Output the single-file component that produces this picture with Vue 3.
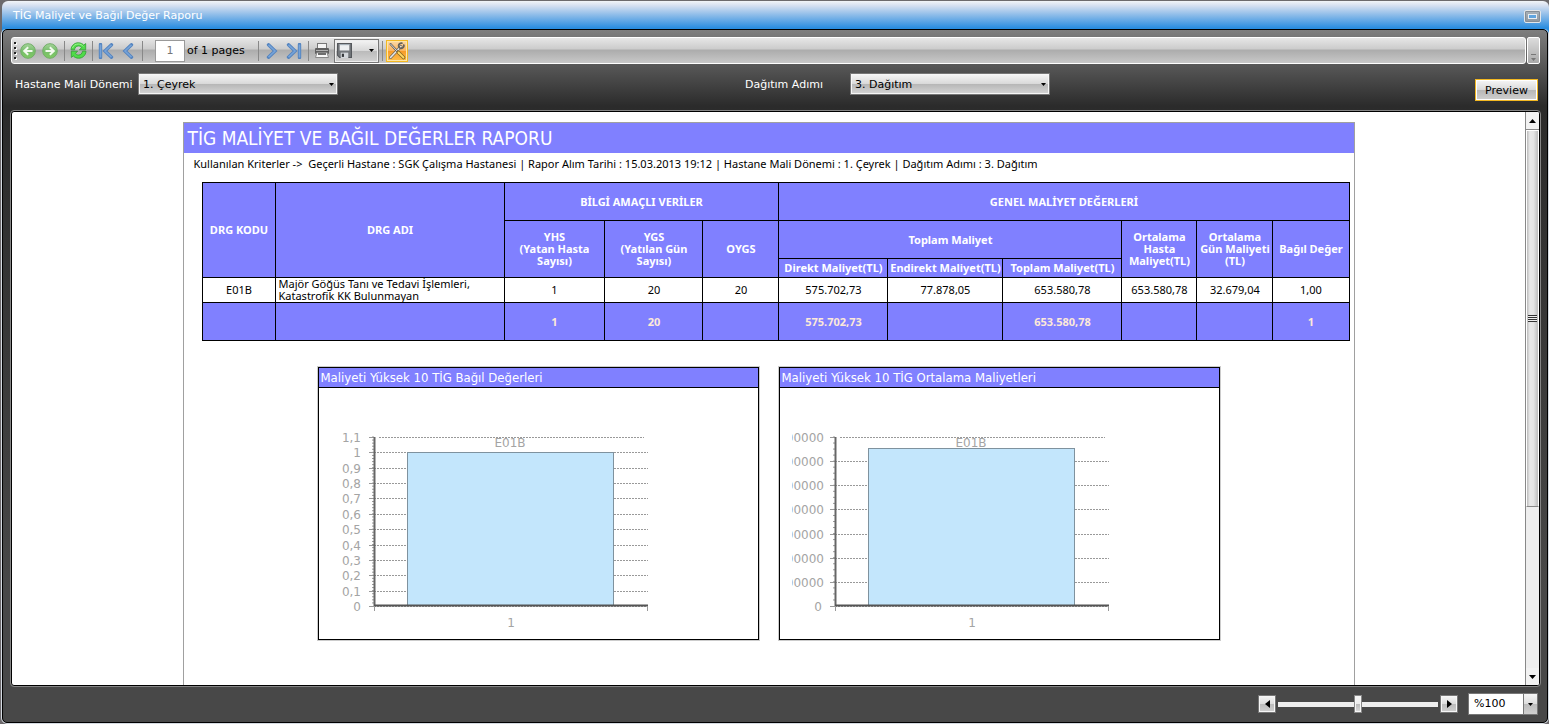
<script setup>
import { ref } from 'vue'

const period = ref('1. Çeyrek')
const step = ref('3. Dağıtım')
const pageNo = ref('1')
const zoom = ref(50)
const zoomText = ref('%100')

const columns = [74, 228, 101, 98, 76, 109, 115, 119, 75, 76, 76]
const columnTotal = columns.reduce((a, b) => a + b, 0)

const row = ['1', '20', '20', '575.702,73', '77.878,05', '653.580,78', '653.580,78', '32.679,04', '1,00']
const totals = ['', '', '1', '20', '', '575.702,73', '', '653.580,78', '', '', '1']

const plotTop = 49
const plotBottom = 218
function ticks(labels) {
  const gap = (plotBottom - plotTop) / (labels.length - 1)
  return labels.map((label, i) => ({ label, y: Math.round(plotTop + gap * i) + 0.5 }))
}

const charts = [
  {
    title: 'Maliyeti Yüksek 10 TİG Bağıl Değerleri',
    ticks: ticks(['1,1', '1', '0,9', '0,8', '0,7', '0,6', '0,5', '0,4', '0,3', '0,2', '0,1', '0']),
    minor: 55,
    barTop: 64,
    labelEnd: 42
  },
  {
    title: 'Maliyeti Yüksek 10 TİG Ortalama Maliyetleri',
    ticks: ticks(['700000', '600000', '500000', '400000', '300000', '200000', '100000', '0']),
    minor: 28,
    barTop: 60,
    labelEnd: 44
  }
]
function minorTicks(count) {
  return Array.from({ length: count }, (_, i) => plotTop + ((plotBottom - plotTop) / count) * i)
}
</script>

<template>
  <main class="window">
    <header class="titlebar">
      <h1>TİG Maliyet ve Bağıl Değer Raporu</h1>
      <button class="restore" aria-label="Simge durumu"><span></span></button>
    </header>

    <section class="panel">
      <div class="toolbar-row">
        <div class="toolbar" role="toolbar">
          <svg class="grip" width="3" height="18" viewBox="0 0 3 18">
            <g fill="#fff"><rect x="1" y="1" width="2" height="2" /><rect x="1" y="6" width="2" height="2" /><rect x="1" y="11" width="2" height="2" /><rect x="1" y="16" width="2" height="2" /></g>
            <g fill="#222"><rect width="2" height="2" /><rect y="5" width="2" height="2" /><rect y="10" width="2" height="2" /><rect y="15" width="2" height="2" /></g>
          </svg>
          <button class="tool" aria-label="Geri">
            <svg width="16" height="16" viewBox="0 0 16 16">
              <defs>
                <linearGradient id="green" x1="0" y1="0" x2="0" y2="1"><stop offset="0" stop-color="#a5d59a" /><stop offset=".5" stop-color="#77bd6b" /><stop offset="1" stop-color="#7fca62" /></linearGradient>
              </defs>
              <circle cx="8" cy="8" r="7.3" fill="url(#green)" stroke="#72ad68" />
              <path d="M12.5 8H4.5M8.2 4.2L4.2 8l4 3.8" fill="none" stroke="#f3faef" stroke-width="2" />
            </svg>
          </button>
          <button class="tool" aria-label="İleri">
            <svg width="16" height="16" viewBox="0 0 16 16">
              <circle cx="8" cy="8" r="7.3" fill="url(#green)" stroke="#72ad68" />
              <path d="M3.5 8h8M7.8 4.2l4 3.8-4 3.8" fill="none" stroke="#f3faef" stroke-width="2" />
            </svg>
          </button>
          <span class="sep"></span>
          <button class="tool" aria-label="Yenile">
            <svg width="17" height="17" viewBox="0 0 17 17">
              <g fill="#4fdc48" stroke="#329d35" stroke-width=".8" stroke-linejoin="round">
                <path d="M1 7.800C1.200 3.500 4.500 .8 8.300 .8c2.400 0 4.200 .9 5.400 2.300L15.700 1.600v6.200H9.400l2.100-2.200C10.700 4.500 9.700 4 8.400 4 6.300 4 4.900 5.400 4.500 7.800z" />
                <path d="M16 9.200c-.2 4.300-3.500 7-7.300 7-2.400 0-4.200-.9-5.400-2.300L1.300 15.400V9.200h6.300l-2.100 2.200c.8 1.100 1.800 1.600 3.100 1.600 2.100 0 3.500-1.400 3.900-3.800z" />
              </g>
              <path d="M2.500 6C3.500 3.300 5.600 2 8.300 2c2 0 3.700.8 5 2.400" fill="none" stroke="#a1f391" />
            </svg>
          </button>
          <span class="sep"></span>
          <button class="tool" aria-label="İlk sayfa">
            <svg width="16" height="16" viewBox="0 0 16 16" fill="none"><path d="M2.500 1.500v13M13.500 1.800L7 8l6.500 6.200" stroke="#5383bf" stroke-width="3.400" stroke-linecap="round" /><path d="M2.500 1.500v13M13.500 1.800L7 8l6.500 6.200" stroke="#76a3d8" stroke-width="1.600" /></svg>
          </button>
          <button class="tool" aria-label="Önceki sayfa">
            <svg width="16" height="16" viewBox="0 0 16 16" fill="none"><path d="M11.500 1.800L5 8l6.500 6.200" stroke="#5383bf" stroke-width="3.400" stroke-linecap="round" /><path d="M11.500 1.800L5 8l6.500 6.200" stroke="#76a3d8" stroke-width="1.600" /></svg>
          </button>
          <span class="sep"></span>
          <input id="page-no" v-model="pageNo" class="page-no" type="text" />
          <label class="page-of" for="page-no">of 1 pages</label>
          <span class="sep"></span>
          <button class="tool" aria-label="Sonraki sayfa">
            <svg width="16" height="16" viewBox="0 0 16 16" fill="none"><path d="M4.500 1.800L11 8l-6.500 6.200" stroke="#5383bf" stroke-width="3.400" stroke-linecap="round" /><path d="M4.500 1.800L11 8l-6.500 6.200" stroke="#76a3d8" stroke-width="1.600" /></svg>
          </button>
          <button class="tool" aria-label="Son sayfa">
            <svg width="16" height="16" viewBox="0 0 16 16" fill="none"><path d="M13.500 1.500v13M2.500 1.800L9 8l-6.500 6.200" stroke="#5383bf" stroke-width="3.400" stroke-linecap="round" /><path d="M13.500 1.500v13M2.500 1.800L9 8l-6.500 6.200" stroke="#76a3d8" stroke-width="1.600" /></svg>
          </button>
          <span class="sep"></span>
          <button class="tool" aria-label="Yazdır">
            <svg width="16" height="16" viewBox="0 0 16 16">
              <rect x="3.500" y=".5" width="9" height="5" fill="#f4f4f4" stroke="#777" />
              <rect x="1" y="5" width="14" height="6" rx="1" fill="#606060" />
              <path d="M2 7.500h12" stroke="#b0b0b0" />
              <path d="M3 9.500h10l1.500 5h-13z" fill="#f8f8f8" stroke="#888" />
              <path d="M4 11h8" stroke="#333" stroke-width="1.400" />
            </svg>
          </button>
          <button class="save" aria-label="Kaydet">
            <svg width="15" height="15" viewBox="0 0 14 14">
              <path d="M.5.5h13v13h-11l-2-2z" fill="#73777b" stroke="#55585c" />
              <rect x="2.500" y="1" width="9" height="6" fill="#edf0f2" />
              <path d="M2.500 1.500h9" stroke="#9faab4" />
              <rect x="3.500" y="9" width="7" height="5" fill="#d3d7db" />
              <rect x="4.500" y="10" width="2" height="3" fill="#35383b" />
            </svg>
            <svg width="5" height="3" viewBox="0 0 5 3"><path d="M0 0h5L2.500 3z" /></svg>
          </button>
          <span class="sep"></span>
          <button class="params" aria-label="Parametreler">
            <svg width="18" height="18" viewBox="0 0 18 18" fill="none" stroke-linecap="round">
              <path d="M2.500 15.500L13 4.500" stroke="#6b665c" stroke-width="3" />
              <path d="M2.500 15.500L13 4.500" stroke="#e8e8e6" stroke-width="1.600" />
              <path d="M15.800 3.200a2.600 2.600 0 1 1-2-2" stroke="#66625a" stroke-width="1.800" />
              <path d="M2.500 2L9 9" stroke="#5c5a56" stroke-width="2" />
              <path d="M2.500 2L9 9" stroke="#ddd" />
              <path d="M10.500 10.500l5 5" stroke="#8a6a23" stroke-width="3.600" />
              <path d="M10.500 10.500l5 5" stroke="#ffd964" stroke-width="1.800" />
            </svg>
          </button>
        </div>
        <button class="overflow" aria-label="Diğer">
          <svg width="5" height="7" viewBox="0 0 5 7"><path d="M0 0h5v1H0zM0 4h5L2.500 7z" fill="#777" /></svg>
        </button>
      </div>

      <form class="criteria" @submit.prevent>
        <div class="field">
          <label for="period">Hastane Mali Dönemi</label>
          <span class="combo">
            <select id="period" v-model="period"><option>1. Çeyrek</option></select>
            <svg width="5" height="3" viewBox="0 0 5 3"><path d="M0 0h5L2.500 3z" /></svg>
          </span>
        </div>
        <div class="field second">
          <label for="step">Dağıtım Adımı</label>
          <span class="combo">
            <select id="step" v-model="step"><option>3. Dağıtım</option></select>
            <svg width="5" height="3" viewBox="0 0 5 3"><path d="M0 0h5L2.500 3z" /></svg>
          </span>
        </div>
        <button class="preview" type="submit">Preview</button>
      </form>

      <div class="viewer">
        <div class="canvas">
          <article class="page">
            <h2>TİG MALİYET VE BAĞIL DEĞERLER RAPORU</h2>
            <p class="info">Kullanılan Kriterler -&gt;&nbsp; Geçerli Hastane : SGK Çalışma Hastanesi | Rapor Alım Tarihi : 15.03.2013 19:12 | Hastane Mali Dönemi : 1. Çeyrek | Dağıtım Adımı : 3. Dağıtım</p>

            <table class="report">
              <colgroup>
                <col v-for="(w, i) in columns" :key="i" :style="{ width: (w / columnTotal) * 100 + '%' }" />
              </colgroup>
              <thead>
                <tr class="tall">
                  <th rowspan="3">DRG KODU</th>
                  <th rowspan="3">DRG ADI</th>
                  <th colspan="3">BİLGİ AMAÇLI VERİLER</th>
                  <th colspan="6">GENEL MALİYET DEĞERLERİ</th>
                </tr>
                <tr class="tall">
                  <th rowspan="2">YHS<br />(Yatan Hasta<br />Sayısı)</th>
                  <th rowspan="2">YGS<br />(Yatılan Gün<br />Sayısı)</th>
                  <th rowspan="2">OYGS</th>
                  <th colspan="3">Toplam Maliyet</th>
                  <th rowspan="2">Ortalama<br />Hasta<br />Maliyet(TL)</th>
                  <th rowspan="2">Ortalama<br />Gün Maliyeti<br />(TL)</th>
                  <th rowspan="2">Bağıl Değer</th>
                </tr>
                <tr class="short">
                  <th>Direkt Maliyet(TL)</th>
                  <th>Endirekt Maliyet(TL)</th>
                  <th>Toplam Maliyet(TL)</th>
                </tr>
              </thead>
              <tbody>
                <tr class="data">
                  <td>E01B</td>
                  <td class="name">Majör Göğüs Tanı ve Tedavi İşlemleri,<br />Katastrofik KK Bulunmayan</td>
                  <td v-for="(v, i) in row" :key="i">{{ v }}</td>
                </tr>
              </tbody>
              <tfoot>
                <tr class="tall">
                  <td v-for="(v, i) in totals" :key="i">{{ v }}</td>
                </tr>
              </tfoot>
            </table>

            <div class="charts">
              <section v-for="c in charts" :key="c.title" class="chart">
                <h3>{{ c.title }}</h3>
                <svg viewBox="0 0 439 251">
                  <svg x="12" y="0" width="427" height="251" viewBox="12 0 427 251">
                    <text v-for="t in c.ticks" :key="t.y" :x="t.label === '0' ? 42 : c.labelEnd" :y="t.y + 4" text-anchor="end" class="axis-text">{{ t.label }}</text>
                  </svg>
                  <g v-for="t in c.ticks" :key="t.y">
                    <path :d="`M50 ${t.y}h5`" stroke="#999" />
                    <path :d="t.y < 50 ? `M60 ${t.y}h265` : `M55 ${t.y}h274`" stroke="#999" stroke-dasharray="2 1" />
                  </g>
                  <path v-for="y in minorTicks(c.minor)" :key="y" :d="`M53 ${y}h2`" stroke="#999" />
                  <path d="M55.500 49v169" stroke="#666" stroke-width="2" />
                  <rect x="88.500" :y="c.barTop + 0.5" width="206" :height="217 - c.barTop" fill="#c3e6fc" stroke="#7f929e" />
                  <path d="M55 217.500h274" stroke="#555" stroke-width="2" />
                  <path d="M55.500 218v5M328.500 218v5" stroke="#999" />
                  <text x="191" y="59" text-anchor="middle" class="axis-text">E01B</text>
                  <text x="192" y="239" text-anchor="middle" class="axis-text">1</text>
                </svg>
              </section>
            </div>
          </article>
        </div>
        <div class="scroll">
          <button aria-label="Yukarı"><svg width="7" height="4" viewBox="0 0 7 4"><path d="M0 4h7L3.500 0z" /></svg></button>
          <div class="track">
            <div class="thumb"><span></span></div>
          </div>
          <button aria-label="Aşağı"><svg width="7" height="4" viewBox="0 0 7 4"><path d="M0 0h7L3.500 4z" /></svg></button>
        </div>
      </div>

      <footer class="zoombar">
        <button class="step" aria-label="Uzaklaştır"><svg width="5" height="8" viewBox="0 0 5 8"><path d="M5 0v8L0 4z" /></svg></button>
        <input v-model="zoom" class="slider" type="range" min="0" max="100" aria-label="Yakınlaştırma" />
        <button class="step" aria-label="Yakınlaştır"><svg width="5" height="8" viewBox="0 0 5 8"><path d="M0 0v8l5-4z" /></svg></button>
        <div class="zoom-box">
          <input v-model="zoomText" type="text" aria-label="Yakınlaştırma oranı" />
          <button aria-label="Oran seç"><svg width="5" height="3" viewBox="0 0 5 3"><path d="M0 0h5L2.500 3z" /></svg></button>
        </div>
      </footer>
    </section>
  </main>
</template>

<style>
body {
  margin: 0;
  background: #6d6a6d;
}
</style>

<style scoped>
* {
  box-sizing: border-box;
}
button,
input,
select {
  margin: 0;
  padding: 0;
  border: 0;
  border-radius: 0;
  font: inherit;
  color: #000;
  outline: 0;
}
button {
  display: flex;
  align-items: center;
  justify-content: center;
  flex: none;
}
svg {
  display: block;
}
.window {
  display: flex;
  flex-direction: column;
  height: 100vh;
  padding: 1px 0 1px 2px;
  font: 11px/14px "DejaVu Sans", Verdana, sans-serif;
}
.titlebar {
  display: flex;
  align-items: center;
  justify-content: space-between;
  flex: none;
  height: 32px;
  margin-bottom: -4px;
  padding: 0 8px 2px 11px;
  border-radius: 6px 6px 0 0;
  background: linear-gradient(#f2f4f8, #d3def0 5px, #85b8e8 15px, #2a8de0 27px, #2a8de0);
}
h1 {
  margin: 0;
  font-size: 11px;
  font-weight: 400;
  color: #fff;
}
.restore {
  width: 17px;
  height: 13px;
  border: 1px solid #e2e6ea;
  border-radius: 2px;
  background: linear-gradient(#a9b2ba, #8f979f);
  box-shadow: inset 0 0 0 1px #858d96;
}
.restore span {
  width: 9px;
  height: 5px;
  border: 1px solid #e8edf2;
  background: #5fa4df;
}
.panel {
  display: flex;
  flex-direction: column;
  flex: 1;
  min-height: 0;
  margin-right: 1px;
  border: 1px solid #000;
  border-radius: 5px;
  box-shadow: 0 1px 0 #d5dbe2, -1px 0 0 #d5dbe2, 1px 0 0 #d5dbe2;
  background: linear-gradient(#7e7e7e, #2b2b2b 76px, #2e2e2e 140px, #484848 560px, #484848);
  padding: 7px 7px 0 8px;
}
.toolbar-row {
  display: flex;
  gap: 1px;
  flex: none;
}
.toolbar {
  display: flex;
  align-items: center;
  flex: 1;
  height: 27px;
  padding-left: 2px;
  border: 1px solid #fff;
  border-radius: 3px;
  background: linear-gradient(#e6e6e6, #cdcdcd 42%, #adadad 50%, #c8c8c8);
}
.grip {
  flex: none;
}
.tool {
  width: 22px;
  height: 22px;
  background: none;
}
.sep {
  flex: none;
  width: 1px;
  height: 20px;
  margin: 0 2px 0 3px;
  background: #888;
}
.page-no {
  width: 30px;
  height: 22px;
  margin-left: 10px;
  border: 1px solid #999;
  background: #fff;
  color: #777;
  text-align: center;
}
.page-of {
  width: 70px;
  padding-left: 2px;
  white-space: nowrap;
}
.save {
  justify-content: space-between;
  width: 45px;
  height: 24px;
  margin-left: 1px;
  padding: 0 4px 0 2px;
  border: 1px solid #777;
  background: linear-gradient(#f4f4f4, #d8d8d8 48%, #bababa 50%, #d2d2d2);
  box-shadow: inset 0 0 0 1px #eee;
}
.params {
  width: 22px;
  height: 22px;
  margin-left: 1px;
  border: 1px solid #f3b822;
  background: linear-gradient(#fbd9a8, #fbb45f 48%, #f79a28 50%, #fdc04c);
  box-shadow: inset 0 0 0 1px #ffe6a8;
}
.overflow {
  align-items: flex-end;
  width: 13px;
  height: 27px;
  padding: 0 0 2px 0;
  border: 1px solid #fff;
  border-radius: 2px;
  background: linear-gradient(#dcdcdc, #aaa);
}
.criteria {
  display: flex;
  align-items: flex-start;
  flex: none;
  height: 47px;
  padding: 9px 2px 0 4px;
  color: #fff;
}
.field {
  display: flex;
  align-items: center;
  flex: 1;
}
.field label {
  width: 123px;
  padding-top: 2px;
  white-space: nowrap;
}
.field.second label {
  width: 105px;
}
.combo {
  display: grid;
  align-items: center;
  width: 200px;
}
.combo select {
  grid-area: 1 / 1;
  width: 100%;
  height: 22px;
  padding: 2px 16px 0 4px;
  appearance: none;
  border: 1px solid #777;
  box-shadow: inset 0 0 0 1px #f6f6f6;
  background: linear-gradient(#f6f6f6, #dadada 48%, #b6b6b6 50%, #d6d6d6);
}
.combo svg {
  grid-area: 1 / 1;
  justify-self: end;
  margin-right: 4px;
  pointer-events: none;
}
.preview {
  width: 63px;
  height: 22px;
  margin-top: 6px;
  padding-top: 2px;
  border: 1px solid #f3b822;
  box-shadow: inset 0 0 0 1px #fff;
  background: linear-gradient(#f6f6f6, #dadada 48%, #b6b6b6 50%, #d0d0d0);
}
.viewer {
  display: flex;
  flex: 1;
  min-height: 0;
  border: 1px solid #000;
  outline: 1px solid #858585;
  border-radius: 3px;
  background: #fff;
  overflow: hidden;
}
.canvas {
  flex: 1;
  min-width: 0;
  padding-top: 10px;
  overflow: hidden;
}
.page {
  width: 100%;
  max-width: 1172px;
  height: 800px;
  margin: 0 auto;
  border: 1px solid #a0a0a0;
  font-family: "Noto Sans", "Lucida Sans", sans-serif;
}
h2 {
  margin: 0;
  padding-left: 4px;
  background: #8080ff;
  color: #fff;
  font: 400 19px/30px "DejaVu Sans Condensed", "DejaVu Sans", Tahoma, sans-serif;
  white-space: nowrap;
}
.info {
  margin: 3px 0 10px 10px;
  font-size: 11px;
  line-height: 16px;
  white-space: nowrap;
}
.report {
  width: 1148px;
  max-width: 100%;
  margin-left: 18px;
  border-collapse: collapse;
  table-layout: fixed;
  font-size: 11px;
  line-height: 12px;
}
.report th,
.report td {
  padding: 0;
  border: 1px solid #000;
  text-align: center;
  white-space: nowrap;
}
.report th,
.report tfoot td {
  background: #8080ff;
  color: #fff;
  font-weight: 700;
}
.report tfoot td {
  color: #fde9d9;
}
.report .name {
  padding-left: 2px;
  text-align: left;
}
.tall {
  height: 38px;
}
.short {
  height: 19px;
}
.data {
  height: 25px;
}
.charts {
  display: flex;
  gap: 20px;
  margin: 26px 0 0 134px;
}
.chart {
  width: 441px;
  border: 1px solid #000;
  box-shadow: 0 0 0 1px #0003;
}
h3 {
  margin: 0;
  padding-left: 2px;
  border-bottom: 1px solid #000;
  background: #8080ff;
  color: #fff;
  font: 400 13px/19px "DejaVu Sans Condensed", "DejaVu Sans", Tahoma, sans-serif;
  white-space: nowrap;
}
.chart > svg {
  width: 100%;
}
.axis-text {
  font: 12px "DejaVu Sans", Verdana, sans-serif;
  fill: #a4a4a4;
}
.scroll {
  display: flex;
  flex-direction: column;
  flex: none;
  width: 14px;
  border-left: 1px solid #888;
  background: #eee;
}
.scroll button {
  width: 13px;
  height: 17px;
  background: #f2f2f2;
}
.track {
  flex: 1;
  border-top: 1px solid #888;
}
.thumb {
  display: flex;
  align-items: center;
  justify-content: center;
  height: 70%;
  border: 1px solid #fff;
  border-bottom: 1px solid #888;
  background: linear-gradient(90deg, #bbb, #e8e8e8 25%, #e4e4e4 60%, #bcbcbc);
}
.thumb span {
  width: 9px;
  height: 7px;
  background: repeating-linear-gradient(#333 0 1px, #eee 1px 2px);
}
.zoombar {
  display: flex;
  align-items: center;
  justify-content: flex-end;
  flex: none;
  height: 36px;
  padding-right: 2px;
}
.step {
  width: 18px;
  height: 18px;
  border: 1px solid #777;
  box-shadow: inset 0 0 0 1px #f6f6f6;
  background: linear-gradient(#f6f6f6, #ddd 48%, #bbb 50%, #d0d0d0);
}
.slider {
  width: 160px;
  height: 18px;
  margin: 0 2px;
  appearance: none;
  background: linear-gradient(#eee, #eee) center / 100% 5px no-repeat;
}
.slider::-webkit-slider-runnable-track {
  height: 18px;
}
.slider::-webkit-slider-thumb {
  appearance: none;
  width: 8px;
  height: 18px;
  border: 1px solid #888;
  background: linear-gradient(#f8f8f8, #eee 48%, #bbb 50%, #ddd);
  box-shadow: inset 0 0 0 1px #f6f6f6;
}
.zoom-box {
  display: flex;
  width: 70px;
  height: 22px;
  margin-left: 10px;
  border: 1px solid #777;
  background: #fff;
}
.zoom-box input {
  flex: 1;
  min-width: 0;
  padding-left: 5px;
  background: none;
}
.zoom-box button {
  width: 14px;
  border-left: 1px solid #777;
  background: linear-gradient(#f6f6f6, #ddd 48%, #bbb 50%, #d0d0d0);
}
</style>
